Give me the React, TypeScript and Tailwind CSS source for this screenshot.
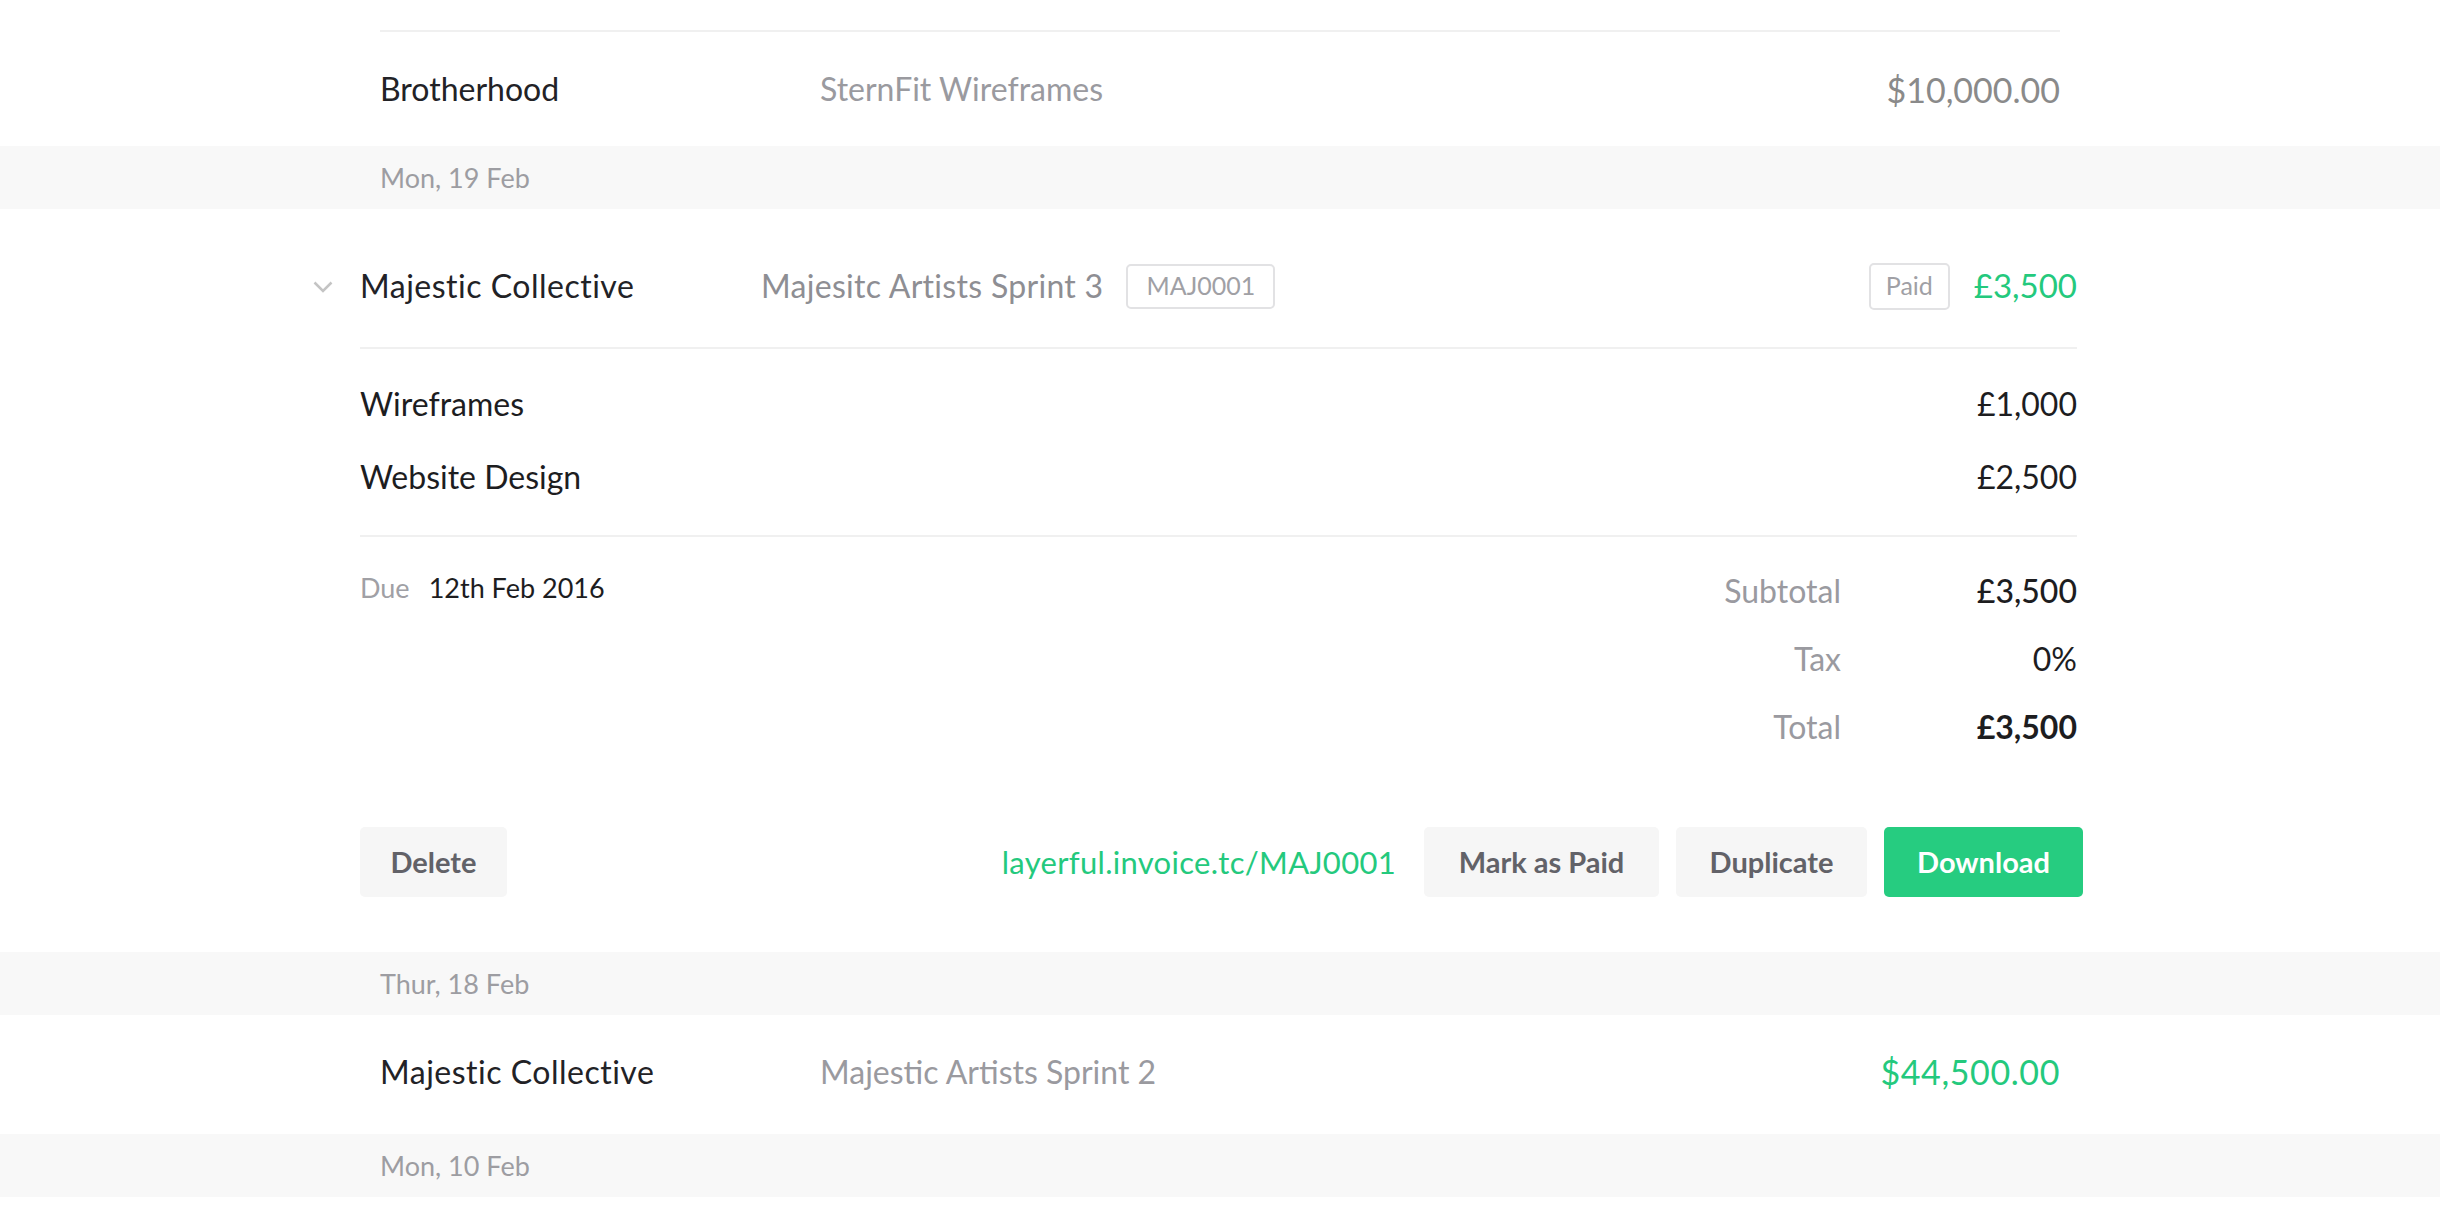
import React from 'react'

const font = { fontFamily: 'Lato, "Open Sans", sans-serif' }

const DateBand: React.FC<{ label: string }> = ({ label }) => (
    <div className="flex h-[63px] w-full items-center bg-[#f8f8f8]">
        <div className="ml-[380px] mt-[2px] text-[27px] text-[#9d9da2]">{label}</div>
    </div>
)

const Row: React.FC<{ name: string; desc: string; amount: string; green?: boolean; border?: boolean; h: string }> = ({ name, desc, amount, green, border, h }) => (
    <div className="mx-[380px]">
        <div className={`flex items-center ${h} ${border ? 'border-t-2 border-[#f0f0f0]' : ''}`}>
            <div className={`w-[440px] text-[32px] text-[#222226] ${green ? 'tracking-[0.5px]' : ''}`}>{name}</div>
            <div className="flex-1 text-[32px] text-[#9a9a9f]">{desc}</div>
            <div className={`text-[34px] ${green ? 'tracking-[0.6px] text-[#24c97d]' : 'text-[#8a8a8a]'}`}>{amount}</div>
        </div>
    </div>
)

const Chevron = () => (
    <svg width="20" height="12" viewBox="0 0 20 12" fill="none" className="mr-[27px]">
        <path d="M1.5 1.5 L10 10 L18.5 1.5" stroke="#c4c4c4" strokeWidth="2.5" />
    </svg>
)

const GrayButton: React.FC<{ label: string; w: string }> = ({ label, w }) => (
    <button className={`flex h-[70px] ${w} items-center justify-center rounded-[5px] bg-[#f6f6f6] text-[29px] font-bold text-[#626268]`}>
        {label}
    </button>
)

const Invoice = () => (
    <div className="ml-[313px] mr-[363px] pb-[55px]">
        {/* header */}
        <div className="flex h-[140px] items-center pt-[16px]">
            <Chevron />
            <div className="flex h-full flex-1 items-center border-b-2 border-[#f0f0f0]">
                <div className="w-[401px] text-[32px] tracking-[0.5px] text-[#222226]">Majestic Collective</div>
                <div className="text-[32px] tracking-[0.3px] text-[#8e8e93]">Majesitc Artists Sprint 3</div>
                <div className="ml-[23px] flex h-[45px] w-[149px] items-center justify-center rounded-[5px] border-2 border-[#e2e2e4] text-[25px] text-[#a0a0a5]">MAJ0001</div>
                <div className="flex-1" />
                <div className="flex h-[47px] w-[81px] items-center justify-center rounded-[5px] border-2 border-[#e2e2e4] text-[25px] text-[#a0a0a5]">Paid</div>
                <div className="ml-[24px] text-[33px] text-[#24c97d]">£3,500</div>
            </div>
        </div>

        <div className="ml-[47px]">
            {/* line items */}
            <div className="border-b-2 border-[#f0f0f0] pt-[18px] pb-[22px]">
                <div className="flex h-[73px] items-center justify-between text-[32px] text-[#1d1d1f]">
                    <span>Wireframes</span>
                    <span>£1,000</span>
                </div>
                <div className="flex h-[73px] items-center justify-between text-[32px] text-[#1d1d1f]">
                    <span>Website Design</span>
                    <span>£2,500</span>
                </div>
            </div>

            {/* totals */}
            <div className="flex pt-[20px]">
                <div className="flex h-[62px] flex-1 items-center text-[27px]">
                    <span className="text-[#a0a0a5]">Due</span>
                    <span className="ml-[19px] text-[#1d1d1f]">12th Feb 2016</span>
                </div>
                <div className="flex flex-col">
                    {[
                        ['Subtotal', '£3,500', 'font-medium'],
                        ['Tax', '0%', ''],
                        ['Total', '£3,500', 'font-bold'],
                    ].map(([l, v, w]) => (
                        <div key={l} className="flex h-[68px] items-center text-[32px]">
                            <span className="w-[200px] text-right text-[#9a9aa0]">{l}</span>
                            <span className={`w-[236px] text-right text-[#1d1d1f] ${w}`}>{v}</span>
                        </div>
                    ))}
                </div>
            </div>

            {/* actions */}
            <div className="-mr-[6px] mt-[66px] flex items-center">
                <GrayButton label="Delete" w="w-[147px]" />
                <div className="flex-1" />
                <span className="mr-[28px] text-[31px] tracking-[0.3px] text-[#24c97d]">layerful.invoice.tc/MAJ0001</span>
                <GrayButton label="Mark as Paid" w="w-[235px]" />
                <div className="w-[17px]" />
                <GrayButton label="Duplicate" w="w-[191px]" />
                <div className="w-[17px]" />
                <button className="flex h-[70px] w-[199px] items-center justify-center rounded-[5px] bg-[#26cc80] text-[29px] font-bold text-white">
                    Download
                </button>
            </div>
        </div>
    </div>
)

export default function App() {
    return (
        <div className="min-h-[1220px] w-full bg-white" style={font}>
            <div className="h-[30px]" />
            <Row name="Brotherhood" desc="SternFit Wireframes" amount="$10,000.00" border h="h-[116px]" />
            <DateBand label="Mon, 19 Feb" />
            <Invoice />
            <DateBand label="Thur, 18 Feb" />
            <Row name="Majestic Collective" desc="Majestic Artists Sprint 2" amount="$44,500.00" green h="h-[119px] pb-[6px]" />
            <DateBand label="Mon, 10 Feb" />
        </div>
    )
}
